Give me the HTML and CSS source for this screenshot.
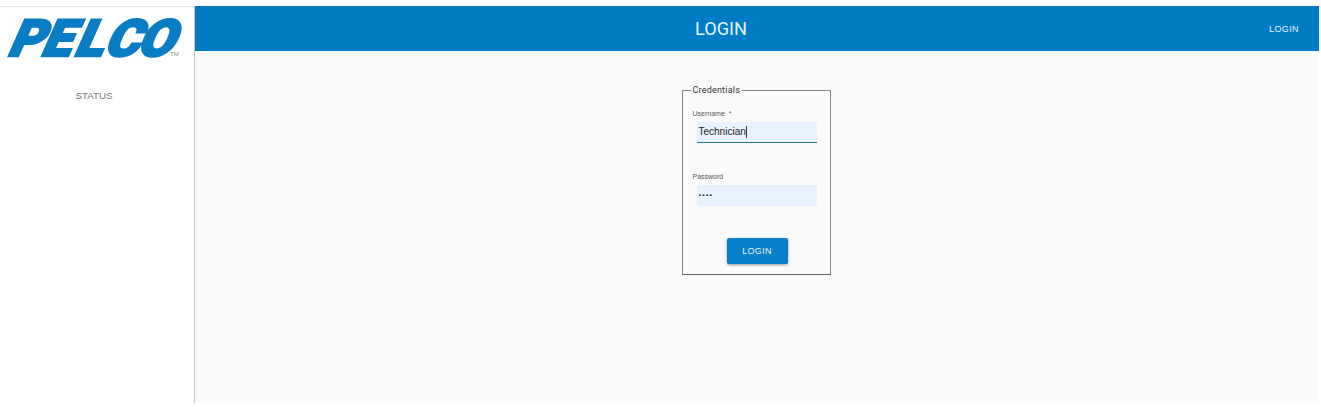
FILE: index.html
```html
<!DOCTYPE html>
<html lang="en">
<head>
<meta charset="utf-8">
<title>Pelco Login</title>
<link rel="stylesheet" href="styles.css">
</head>
<body>
<div class="app">
  <aside class="sidebar">
    <svg class="logo" viewBox="0 0 194 60" role="img" aria-label="Pelco">
      <g transform="translate(5 49) skewX(-24) scale(1.04 1)">
        <text class="logo-word" x="1 33 65 93.5 125" y="0">PELCO</text>
      </g>
      <text class="logo-tm" x="170" y="49">TM</text>
    </svg>
    <nav class="nav"><a class="nav-link">STATUS</a></nav>
  </aside>
  <div class="main">
    <header class="topbar">
      <h1 class="title">LOGIN</h1>
      <a class="top-link">LOGIN</a>
    </header>
    <main class="content">
      <form class="form">
        <fieldset class="credentials">
          <legend class="legend">Credentials</legend>
          <label class="label">Username <span class="required">*</span></label>
          <div class="input focused"><span class="value">Technician</span><span class="caret"></span></div>
          <label class="label second">Password</label>
          <div class="input"><span class="dots">••••</span></div>
          <button class="submit" type="button">LOGIN</button>
        </fieldset>
      </form>
    </main>
  </div>
</div>
</body>
</html>
```
FILE: styles.css
```css
* { box-sizing: border-box; }
body { margin: 0; background: #fff; font-family: Roboto, "Liberation Sans", sans-serif; }
.app { display: flex; width: 1319px; height: 403px; padding-top: 6px; }
.sidebar { width: 195px; border-top: 1px solid #e4e4e4; border-right: 1px solid #c4c4c4; background: #fff; }
.logo { display: block; width: 194px; height: 60px; overflow: visible; }
.logo-word { font: 900 51px Roboto, sans-serif; fill: #087dc3; stroke: #087dc3; stroke-width: 2.5px; }
.logo-tm { font: 6px "Liberation Sans", sans-serif; fill: #888; }
.nav { padding-top: 22px; text-align: center; }
.nav-link { display: block; padding-right: 6px; font: 9.8px/14px "Liberation Sans", sans-serif; color: #777; }
.main { display: flex; flex: 1; flex-direction: column; background: #fafafa; }
.topbar { display: grid; grid-template-columns: 1fr auto 1fr; align-items: center; height: 45px; padding-right: 20px; padding-left: 16px; background: #007bc5; color: #e4f6ff; }
.title { grid-column: 2; margin: 0 68px 0 0; font-size: 18.2px; font-weight: 400; line-height: 24px; }
.top-link { justify-self: end; padding-top: 1px; font: 9px/14px "Liberation Sans", sans-serif; letter-spacing: .4px; }
.content { display: flex; justify-content: center; padding: 34px 2px 0 0; }
.form { width: 149px; }
.credentials { display: flex; flex-direction: column; height: 190px; margin: 0; padding: 13px 13px 0 10px; border: 1px solid #858585; border-bottom-color: #666; }
.legend { margin-left: -2px; padding: 0 2px; font-size: 9px; line-height: 11px; letter-spacing: .2px; color: #333; }
.label { display: block; height: 10px; font: 7px/10px "Liberation Sans", sans-serif; color: #555; }
.required { padding-left: 2px; }
.second { margin-top: 29px; }
.input { display: flex; align-items: center; height: 21px; margin: 3px 0 0 4px; padding-left: 2px; background: #e8f2fe; color: #222; }
.focused { border-bottom: 1px solid #24789f; }
.value { font: 10px/12px "Liberation Sans", sans-serif; }
.caret { width: 1px; height: 12px; background: #333; }
.dots { font: bold 8px/10px Roboto, sans-serif; letter-spacing: .7px; }
.submit { width: 61px; height: 26px; margin: 32px 0 0 34px; padding: 0; border: 0; border-radius: 2px; background: #087fc9; color: #e4f6ff; font: 9px "Liberation Sans", sans-serif; letter-spacing: .3px; box-shadow: 0 1px 3px rgba(0, 0, 0, .4); }
```
